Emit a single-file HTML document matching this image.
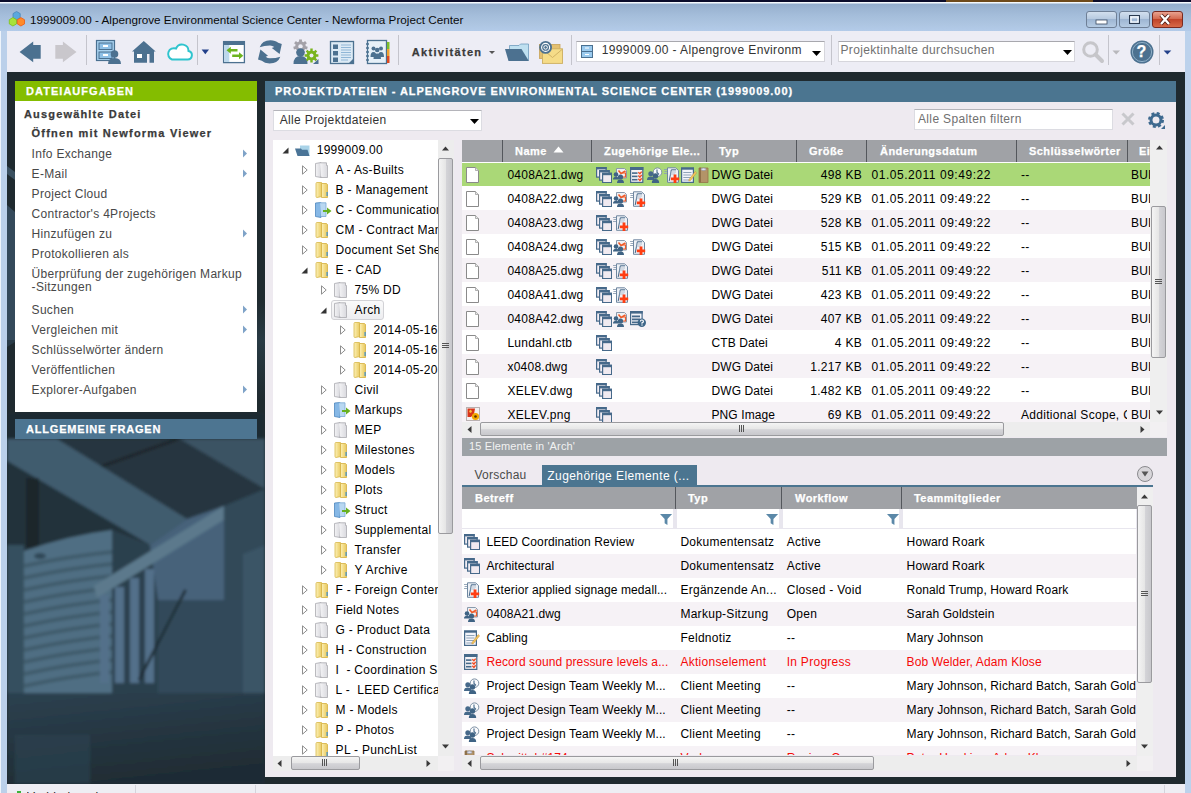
<!DOCTYPE html>
<html><head><meta charset="utf-8">
<style>
*{margin:0;padding:0;box-sizing:border-box}
html,body{width:1191px;height:793px;overflow:hidden;background:#A9C1DC;font-family:"Liberation Sans",sans-serif;font-size:12px;color:#000;position:relative}
.a{position:absolute}
.t{position:absolute;white-space:nowrap;line-height:1}
.b{font-weight:bold;-webkit-text-stroke:0.25px currentColor}
svg{position:absolute;overflow:visible}
</style></head><body>

<svg width="0" height="0" style="position:absolute;left:0;top:0">
<defs>
<linearGradient id="gy" x1="0" x2="1" y1="0" y2="0"><stop offset="0" stop-color="#FBF1BC"/><stop offset="0.5" stop-color="#F3DC86"/><stop offset="1" stop-color="#E6C760"/></linearGradient>
<linearGradient id="gg" x1="0" x2="1" y1="0" y2="0"><stop offset="0" stop-color="#F4F4F6"/><stop offset="1" stop-color="#D9D9DE"/></linearGradient>
<linearGradient id="gthv" x1="0" x2="1" y1="0" y2="0"><stop offset="0" stop-color="#F2F2F2"/><stop offset="0.45" stop-color="#EAEAEA"/><stop offset="0.55" stop-color="#D8D8DA"/><stop offset="1" stop-color="#C9C9CC"/></linearGradient>
<linearGradient id="gthh" x1="0" x2="0" y1="0" y2="1"><stop offset="0" stop-color="#F2F2F2"/><stop offset="0.45" stop-color="#EAEAEA"/><stop offset="0.55" stop-color="#D8D8DA"/><stop offset="1" stop-color="#C9C9CC"/></linearGradient>

<!-- tree: expanders -->
<symbol id="exo" viewBox="0 0 6 10"><path d="M0.5 0.8L5.2 5L0.5 9.2Z" fill="none" stroke="#8E8E8E" stroke-width="1"/></symbol>
<symbol id="exf" viewBox="0 0 7 7"><path d="M0.5 6.5H6.5V0.5Z" fill="#333"/></symbol>

<!-- yellow folder 14x16 -->
<symbol id="fy" viewBox="0 0 14 16">
<path d="M1 1.5Q1 0.5 2 0.5H6.5L7 1.5V14.5L2 15.5Q1 15.5 1 14.5Z" fill="url(#gy)" stroke="#D8B848" stroke-width="0.8"/>
<path d="M6.5 1.5H11.5L12.5 2.5V15.5H6.5Z" fill="url(#gy)" stroke="#D4B040" stroke-width="0.8"/>
<rect x="11.5" y="10" width="1.2" height="4" fill="#3C8FD0"/>
</symbol>
<!-- grey folder -->
<symbol id="fg" viewBox="0 0 14 16">
<path d="M0.5 1.5L6 0.5V15.5L0.5 14.5Z" fill="url(#gg)" stroke="#A9A9AE" stroke-width="0.8"/>
<path d="M5 0.8H11.5V3.5H12.5V15.5H6V14.5" fill="url(#gg)" stroke="#A9A9AE" stroke-width="0.8"/>
</symbol>
<!-- blue folder w green arrow -->
<symbol id="fb" viewBox="0 0 18 16">
<path d="M0.5 1L6 0.5V15.5L0.5 14.5Z" fill="#86B8E6" stroke="#4D86BE" stroke-width="0.8"/>
<path d="M5 0.8H11V14.5H6" fill="#B9D8F2" stroke="#7AA8D4" stroke-width="0.8"/>
<path d="M8 8H12V5.5L16.5 9L12 12.5V10H8Z" fill="#67B020"/>
</symbol>
<!-- root folder -->
<symbol id="fr" viewBox="0 0 16 12">
<path d="M5 0.5H14.5V11H5Z" fill="#A9D3E8"/>
<path d="M0 3.5H6L7 4.8H12.5L14.5 11H2.5Z" fill="#4A7497"/>
</symbol>
<!-- page -->
<symbol id="pg" viewBox="0 0 13 16">
<path d="M0.5 0.5H9.5L12.5 3.5V15.5H0.5Z" fill="#fff" stroke="#8A8A8A" stroke-width="1"/>
<path d="M9.5 0.5V3.5H12.5" fill="#E8E8E8" stroke="#A0A0A0" stroke-width="0.8"/>
</symbol>
<symbol id="png" viewBox="0 0 16 16">
<rect x="0.5" y="0.5" width="13" height="13" fill="#F4F0F0" stroke="#B8B0B0"/>
<path d="M1.5 1.5H9L8 7L5 10H1.5Z" fill="#D8341A"/>
<path d="M3 4L5 2.5L6 5L4 6Z" fill="#F6C040"/>
<circle cx="9.5" cy="9.5" r="3.6" fill="#F2A800"/><circle cx="9.5" cy="9.5" r="1.3" fill="#5A3000"/>
</symbol>

<!-- related: docset -->
<symbol id="rds" viewBox="0 0 16 16">
<rect x="0.6" y="0.6" width="9.5" height="9.5" fill="#F3EEF4" stroke="#46698A" stroke-width="1.2"/><rect x="0" y="0" width="10.7" height="2.4" fill="#46698A"/>
<rect x="3.6" y="3.6" width="9.5" height="9.5" fill="#F3EEF4" stroke="#46698A" stroke-width="1.2"/><rect x="3" y="3" width="10.7" height="2.4" fill="#46698A"/>
<rect x="6.6" y="6.3" width="9" height="9.3" fill="#F0EAF0" stroke="#46698A" stroke-width="1.2"/><rect x="6" y="5.8" width="10.2" height="2.4" fill="#46698A"/>
</symbol>
<!-- markup session -->
<symbol id="rmk" viewBox="0 0 16 16">
<path d="M3.5 1.5H11.5L13.5 3.5V11H3.5Z" fill="#EEF0F4" stroke="#8A9AAC" stroke-width="1"/>
<path d="M5.5 3.5L8 6.5L12.5 4" fill="none" stroke="#F05A28" stroke-width="1.6"/>
<path d="M9 6H12.5V10H10" fill="none" stroke="#F05A28" stroke-width="1.2"/>
<circle cx="3" cy="7.5" r="2.3" fill="#3F6384"/><path d="M0 12.5Q0 9.8 3 9.8Q6 9.8 6 12.5Z" fill="#3F6384"/>
<circle cx="7.5" cy="10" r="2.6" fill="#3F6384"/><path d="M4 16Q4 12.6 7.5 12.6Q11 12.6 11 16Z" fill="#3F6384"/>
</symbol>
<!-- action list -->
<symbol id="rac" viewBox="0 0 16 16">
<rect x="0.6" y="0.6" width="12.2" height="14.8" fill="#F6F2F6" stroke="#46698A" stroke-width="1.2"/><rect x="0" y="0" width="13.4" height="3" fill="#46698A"/>
<rect x="2" y="5.3" width="5.5" height="1.6" fill="#46698A"/><rect x="2" y="8.6" width="5.5" height="1.6" fill="#46698A"/><rect x="2" y="11.9" width="5.5" height="1.6" fill="#46698A"/>
<path d="M8.3 5.2l1.6 1.6 1.8-2.2M8.3 8.5l1.6 1.6 1.8-2.2M8.3 11.8l1.6 1.6 1.8-2.2" fill="none" stroke="#F04A22" stroke-width="1.4"/>
</symbol>
<!-- meeting -->
<symbol id="rmt" viewBox="0 0 16 16">
<circle cx="10.5" cy="5.2" r="4.3" fill="#FAFAFC" stroke="#7C90A4" stroke-width="1"/><path d="M10 2.5V5.5L12 7.5" fill="none" stroke="#46698A" stroke-width="1.1"/>
<circle cx="3.8" cy="6.8" r="2.5" fill="#46698A"/><path d="M0 13Q0 9.6 3.8 9.6Q7.6 9.6 7.6 13Z" fill="#46698A"/>
<circle cx="8.5" cy="9" r="2.7" fill="#3F6384"/><path d="M4.8 16Q4.8 12 8.5 12Q12.2 12 12.2 16Z" fill="#3F6384"/>
</symbol>
<!-- supplemental -->
<symbol id="rsp" viewBox="0 0 16 16">
<path d="M0 2.5H3M0.5 4.5H3M0 6.5H3" stroke="#8FA0B4" stroke-width="0.9"/>
<path d="M3.5 0.8H11.5L14.5 3.5V15.3H3.5Z" fill="#EEF1F6" stroke="#6F87A0" stroke-width="1"/>
<path d="M5.2 14L7.3 2.8H12" fill="none" stroke="#46698A" stroke-width="1"/>
<path d="M6 5H12M6 7H11" stroke="#A8B6C6" stroke-width="0.8"/>
<path d="M9.6 7.6H12.4V10.4H15.2V13.2H12.4V16H9.6V13.2H6.8V10.4H9.6Z" fill="#FF3E12"/>
</symbol>
<!-- field note -->
<symbol id="rfn" viewBox="0 0 16 16">
<rect x="0.6" y="1.1" width="11.8" height="14.3" fill="#F2F4FA" stroke="#46698A" stroke-width="1.2"/><rect x="0" y="0.5" width="13" height="2.2" fill="#46698A"/>
<path d="M2.3 5.5H10.5M2.3 8H10.5M2.3 10.5H10.5M2.3 13H8" stroke="#90A4B8" stroke-width="1"/>
<path d="M8.2 12.2L14.2 4.6L15.6 5.8L9.6 13.4L7.8 14Z" fill="#F2C860" stroke="#C88A30" stroke-width="0.5"/>
</symbol>
<!-- transmittal -->
<symbol id="rtr" viewBox="0 0 16 16">
<path d="M1 1H10V15.5H1Z" fill="#B39468" stroke="#94744A" stroke-width="0.8"/>
<path d="M1 1L3 0.5V15.5L1 15.5Z" fill="#8F7048"/>
<ellipse cx="5.5" cy="2.3" rx="2.5" ry="1.2" fill="#E4E0EC" stroke="#8090A8" stroke-width="0.6"/>
</symbol>
<!-- list doc with ? -->
<symbol id="rq" viewBox="0 0 16 16">
<rect x="0.6" y="0.6" width="11.5" height="13" fill="#F4F4F8" stroke="#46698A" stroke-width="1.2"/><rect x="0" y="0" width="12.7" height="2.6" fill="#46698A"/>
<rect x="2" y="4.5" width="8" height="1.8" fill="#46698A"/><rect x="2" y="7.5" width="8" height="1.8" fill="#46698A"/><rect x="2" y="10.5" width="6" height="1.8" fill="#46698A"/>
<circle cx="11.8" cy="11.8" r="4.2" fill="#3E6688"/>
<path d="M10.4 10.6Q10.4 9 11.9 9Q13.4 9 13.4 10.5Q13.4 11.4 12 11.9V12.7" fill="none" stroke="#fff" stroke-width="1.2"/><rect x="11.4" y="13.4" width="1.2" height="1.2" fill="#fff"/>
</symbol>
<!-- filter funnel -->
<symbol id="fun" viewBox="0 0 14 14"><path d="M0 1H13L8 6.5V13L5 11V6.5Z" fill="#5B88A8"/></symbol>
<!-- scroll arrows -->
<symbol id="au" viewBox="0 0 9 5"><path d="M1 4.5L4.5 0.5L8 4.5Z" fill="#3A3A3A"/></symbol>
<symbol id="ad" viewBox="0 0 9 5"><path d="M1 0.5L4.5 4.5L8 0.5Z" fill="#3A3A3A"/></symbol>
<symbol id="al" viewBox="0 0 5 9"><path d="M4.5 1L0.5 4.5L4.5 8Z" fill="#3A3A3A"/></symbol>
<symbol id="ar" viewBox="0 0 5 9"><path d="M0.5 1L4.5 4.5L0.5 8Z" fill="#3A3A3A"/></symbol>
</defs></svg>
<div class="a" style="left:0px;top:0px;width:1191px;height:2px;background:#0B0C2A;"></div>
<div class="a" style="left:946px;top:0px;width:147px;height:2px;background:#6E4A1C;"></div>
<div class="a" style="left:0px;top:2px;width:1191px;height:29px;background:linear-gradient(#F4F8FC 0,#F4F8FC 1px,#94AECD 2px,#9BB4D2 6px,#A5BEDB 14px,#ADC5E1 22px,#B3CBE9 29px);"></div>
<div class="a" style="left:0px;top:31px;width:7px;height:762px;background:#BBD0EA;"></div>
<div class="a" style="left:0px;top:31px;width:1px;height:762px;background:#EEF4FB;"></div>
<div class="a" style="left:1185px;top:31px;width:6px;height:762px;background:#BCD2EC;"></div>
<svg width="18" height="18" style="left:8px;top:10px">
<path d="M8.6 1.5L12.2 3.6V7.8L8.6 9.9L5 7.8V3.6Z" fill="#5BA8DD" stroke="#4E86B8" stroke-width="0.8"/>
<path d="M4.9 7.6L8.5 9.7V13.9L4.9 16L1.3 13.9V9.7Z" fill="#A8E23A" stroke="#7CC21A" stroke-width="0.8"/>
<path d="M12.9 7.6L16.5 9.7V13.9L12.9 16L9.3 13.9V9.7Z" fill="#FF8A2A" stroke="#F05A10" stroke-width="0.8"/>
</svg>
<div class="t" style="left:30.0px;top:13.80px;font-size:11.7px;color:#0A0A0A;">1999009.00 - Alpengrove Environmental Science Center - Newforma Project Center</div>
<div class="a" style="left:1086px;top:11px;width:31px;height:17px;background:linear-gradient(#D2DFEE,#B7CAE0 45%,#9EB6D3 50%,#B5CBE3);border:1px solid #6E7F96;border-radius:3px;"></div>
<div class="a" style="left:1119px;top:11px;width:31px;height:17px;background:linear-gradient(#D2DFEE,#B7CAE0 45%,#9EB6D3 50%,#B5CBE3);border:1px solid #6E7F96;border-radius:3px;"></div>
<div class="a" style="left:1152px;top:11px;width:31px;height:17px;background:linear-gradient(#E8A290,#D46A50 45%,#C0442A 50%,#D86A48);border:1px solid #7A2A20;border-radius:3px;"></div>
<svg width="100" height="20" style="left:1086px;top:11px">
<rect x="10" y="9" width="11" height="4" fill="#fff" stroke="#3A4A60" stroke-width="0.8"/>
<rect x="43.5" y="4.5" width="10" height="8" fill="none" stroke="#2A3A50" stroke-width="1"/><rect x="45" y="6" width="7" height="5" fill="none" stroke="#fff" stroke-width="1.2"/>
<path d="M75 4L83 13M83 4L75 13" stroke="#4A1810" stroke-width="4"/><path d="M75 4L83 13M83 4L75 13" stroke="#fff" stroke-width="2.4"/>
</svg>
<div class="a" style="left:7px;top:31px;width:1178px;height:41px;background:#EDEDF5;"></div>
<div class="a" style="left:86px;top:35px;width:1px;height:30px;background:#C4C4CC;"></div>
<div class="a" style="left:197px;top:35px;width:1px;height:30px;background:#C4C4CC;"></div>
<div class="a" style="left:398px;top:35px;width:1px;height:30px;background:#C4C4CC;"></div>
<div class="a" style="left:571px;top:35px;width:1px;height:30px;background:#C4C4CC;"></div>
<div class="a" style="left:831px;top:35px;width:1px;height:30px;background:#C4C4CC;"></div>
<div class="a" style="left:1108px;top:35px;width:1px;height:30px;background:#C4C4CC;"></div>
<div class="a" style="left:1159px;top:35px;width:1px;height:30px;background:#C4C4CC;"></div>
<svg width="1191" height="41" style="left:0;top:31px">
<path d="M19.6 20.9L33.2 10.6V14H40.7V27.7H33.2V31.2Z" fill="#4C7190"/>
<path d="M76.5 20.9L62.9 10.6V14H55.3V27.7H62.9V31.2Z" fill="#C9C7CC"/>
<!-- cabinet -->
<rect x="96.5" y="9.5" width="18" height="20" fill="#A9D2F0" stroke="#4A7090" stroke-width="1.2"/>
<rect x="99" y="12" width="13" height="6.5" fill="#8FC0E6" stroke="#4A7090" stroke-width="1"/>
<rect x="99" y="21" width="13" height="6.5" fill="#8FC0E6" stroke="#4A7090" stroke-width="1"/>
<rect x="103" y="14" width="5" height="2" fill="#fff"/><rect x="103" y="23" width="5" height="2" fill="#fff"/>
<circle cx="114.5" cy="23" r="3.8" fill="#4C7190"/><path d="M108 33Q108 27 114.5 27Q121 27 121 33Z" fill="#4C7190"/>
<!-- house -->
<path d="M132 20.5L143.8 10L155.7 20.5H154V31.7H149.5V23H147V31.7H134V20.5Z" fill="#4C7190"/>
<rect x="137" y="23" width="5" height="4" fill="#fff"/>
<!-- cloud -->
<path d="M172 28.5H187.5A4.3 4.3 0 0 0 188.5 20A6.5 6.5 0 0 0 176 17.5A4.8 4.8 0 0 0 172 28.5Z" fill="#fff" stroke="#2FC4CE" stroke-width="2"/>
<path d="M201.6 18.6H209L205.3 23.2Z" fill="#22408A"/>
<!-- transfer -->
<rect x="223.6" y="10.6" width="20.8" height="21" fill="#fff" stroke="#4C7190" stroke-width="1.3"/>
<rect x="223" y="10" width="22" height="4" fill="#4C7190"/>
<rect x="224.3" y="14" width="5" height="17" fill="#BCD8EC"/>
<path d="M226.5 19.3L230.8 15.8V18.1H237.5V20.5H230.8V22.8Z" fill="#6CB41E"/>
<path d="M243.3 24.8L239 21.3V23.6H232.2V26H239V28.3Z" fill="#6CB41E"/>
<!-- sync -->
<path d="M259.7 16.3Q262 9.2 270.5 9.2Q275.5 9.2 278.2 11.8L281.8 13L279.6 23L271.8 16.9L274.3 15.9Q272.5 14.4 270 14.4Q264 14.4 259.7 16.3Z" fill="#4C7190"/>
<path d="M280.3 25.7Q278 32.4 269.5 32.4Q264.5 32.4 261.8 29.8L258 28.6L260.4 18.6L268 24.7L265.7 25.7Q267.5 27.2 270 27.2Q276 27.2 280.3 25.7Z" fill="#4C7190"/>
<!-- gear person -->
<path d="M299.07 10.40L299.06 8.45L301.94 8.45L301.93 10.40L303.60 11.20L305.11 9.97L306.92 12.23L305.38 13.44L305.79 15.24L307.70 15.66L307.06 18.48L305.16 18.03L304.00 19.48L304.86 21.23L302.26 22.48L301.42 20.72L299.58 20.72L298.74 22.48L296.14 21.23L297.00 19.48L295.84 18.03L293.94 18.48L293.30 15.66L295.21 15.24L295.62 13.44L294.08 12.23L295.89 9.97L297.40 11.20Z" fill="#A3A1A8"/><circle cx="300.5" cy="15.5" r="2.2" fill="#EDEDF5"/>
<circle cx="300.5" cy="21.5" r="4.3" fill="#4C7190"/><path d="M293.5 33Q293.5 25 300.5 25Q307.5 25 307.5 33Z" fill="#4C7190"/>
<path d="M310.31 19.64L310.27 17.61L312.73 17.61L312.69 19.64L314.10 20.23L315.50 18.76L317.24 20.50L315.77 21.90L316.36 23.31L318.39 23.27L318.39 25.73L316.36 25.69L315.77 27.10L317.24 28.50L315.50 30.24L314.10 28.77L312.69 29.36L312.73 31.39L310.27 31.39L310.31 29.36L308.90 28.77L307.50 30.24L305.76 28.50L307.23 27.10L306.64 25.69L304.61 25.73L304.61 23.27L306.64 23.31L307.23 21.90L305.76 20.50L307.50 18.76L308.90 20.23Z" fill="#78B41C"/><circle cx="311.5" cy="24.5" r="2" fill="#EDEDF5"/>
<path d="M313 33H318.5V28Z" fill="#4C7190"/>
<!-- list -->
<rect x="330.5" y="10.5" width="23" height="22" fill="#DCEAF5" stroke="#4C7190" stroke-width="1.3"/>
<rect x="333" y="13.5" width="5" height="4.5" fill="#4C7190"/><rect x="333" y="20" width="5" height="4.5" fill="#4C7190"/><rect x="333" y="26.5" width="5" height="4.5" fill="#4C7190"/>
<path d="M341 14H351M341 16.5H351M341 19H351M341 21.5H351M341 24H351M341 26.5H351M341 29H348" stroke="#8FB6D6" stroke-width="1.2"/>
<path d="M354 33H348L354 27Z" fill="#4C7190"/>
<!-- address book -->
<rect x="367.5" y="9.5" width="19" height="23" fill="#E6F0F8" stroke="#4C7190" stroke-width="1.3"/>
<path d="M366 13H369M366 17H369M366 21H369M366 25H369M366 29H369" stroke="#4C7190" stroke-width="1.5"/>
<rect x="387" y="11" width="2.5" height="7" fill="#7CBF2A"/><rect x="387" y="18" width="2.5" height="7" fill="#F0A030"/><rect x="387" y="25" width="2.5" height="7" fill="#E04A20"/>
<circle cx="373.5" cy="17.5" r="2" fill="#4C7190"/><circle cx="381" cy="17.5" r="2" fill="#4C7190"/><circle cx="377.2" cy="19" r="2.3" fill="#4C7190"/>
<path d="M370.5 26Q370.5 21 373.5 21Q376.5 21 376.5 26ZM378 26Q378 21 381 21Q384 21 384 26Z" fill="#4C7190"/>
<path d="M373.5 28Q373.5 22.5 377.2 22.5Q381 22.5 381 28Z" fill="#4C7190"/>
<!-- activities arrow -->
<path d="M489 20H495L492 23Z" fill="#555"/>
<!-- folder -->
<path d="M509.5 14.5H519L520.5 13H528.5V29.5H509.5Z" fill="#BFE0F0" stroke="#6E9CBC" stroke-width="0.8"/>
<path d="M505 18H521.5L528.8 30H508.5Z" fill="#4C7190"/>
<!-- mail -->
<rect x="539.5" y="13.5" width="20.5" height="14" fill="#E4C070" stroke="#C8A458" stroke-width="0.8"/>
<rect x="542.5" y="17.8" width="20" height="14.6" fill="#F5DC88" stroke="#CDAE60" stroke-width="0.9"/>
<path d="M543 18.5L552.5 26.5L562 18.5" fill="none" stroke="#CDAE60" stroke-width="0.9"/>
<circle cx="545.6" cy="16.4" r="6.4" fill="#4C7190"/>
<circle cx="545.6" cy="16.4" r="4" fill="none" stroke="#fff" stroke-width="1.1"/>
<circle cx="545.6" cy="16.4" r="1.8" fill="none" stroke="#fff" stroke-width="1"/>
<!-- magnifier -->
<circle cx="1090.5" cy="18.5" r="6.8" fill="#EDEDF5" stroke="#C6C6CA" stroke-width="3"/>
<path d="M1095.5 23.5L1102 30" stroke="#C6C6CA" stroke-width="4" stroke-linecap="round"/>
<path d="M1112.5 19.5H1120L1116.2 23.5Z" fill="#B8B8BC"/>
<!-- help -->
<circle cx="1142" cy="21" r="11.5" fill="#4C7190"/>
<circle cx="1142" cy="21" r="9.6" fill="none" stroke="#8FB0C8" stroke-width="1"/>
<path d="M1163.6 19.5H1171.3L1167.4 23.5Z" fill="#22408A"/>
</svg>
<div class="t b" style="left:1136.6px;top:44.46px;font-size:16px;color:#FFFFFF;">?</div>
<div class="t b" style="left:411.8px;top:46.99px;font-size:11px;letter-spacing:1.3px;color:#3A3A3A;">Aktivit&auml;ten</div>
<div class="a" style="left:576px;top:41px;width:249px;height:21px;background:#FFFFFF;border:1px solid #D6D6DC;border-top-color:#A8A8AE"></div>
<svg width="12" height="13" style="left:581px;top:45px"><rect x="0.5" y="0.5" width="11" height="12" fill="#9ACAEE" stroke="#4A7090"/><path d="M1 6.5H11" stroke="#4A7090"/><path d="M4 3H8M4 9.5H8" stroke="#fff" stroke-width="1.2"/></svg>
<div class="t" style="left:601.7px;top:43.74px;letter-spacing:0.38px;color:#333333;">1999009.00 - Alpengrove Environm</div>
<svg width="9" height="5" style="left:812px;top:51px"><path d="M0 0H9L4.5 5Z" fill="#000"/></svg>
<div class="a" style="left:838px;top:41px;width:237px;height:21px;background:#FFFFFF;border:1px solid #D6D6DC;border-top-color:#A8A8AE"></div>
<div class="t" style="left:840.4px;top:44.44px;letter-spacing:0.37px;color:#707070;">Projektinhalte durchsuchen</div>
<svg width="9" height="5" style="left:1063px;top:50px"><path d="M0 0H9L4.5 5Z" fill="#000"/></svg>
<div class="a" style="left:7px;top:72px;width:1178px;height:712px;background:#1F2A2F;"></div>
<svg width="10" height="340" style="left:7px;top:72px"><path d="M0 94L8 100V108L0 102Z" fill="#3A5060"/><path d="M0 133L8 140V268H0Z" fill="#34495A"/><path d="M0 268H8V270L0 275Z" fill="#2A3C48"/></svg><div class="a" style="left:257px;top:300px;width:8px;height:100px;background:linear-gradient(#1F2A2F,#283A44 40%,#1F2A2F);"></div>
<div class="a" style="left:7px;top:784px;width:1178px;height:9px;background:#EEEEF4;"></div>
<div class="a" style="left:135px;top:785px;width:1px;height:8px;background:#D4D4DC;"></div>
<div class="a" style="left:255px;top:785px;width:1px;height:8px;background:#D4D4DC;"></div>
<div class="a" style="left:1164px;top:785px;width:1px;height:8px;background:#D4D4DC;"></div>
<div class="a" style="left:17px;top:791px;width:4px;height:2px;background:#3DB23A;"></div>
<div class="a" style="left:27px;top:784px;width:105px;height:9px;overflow:hidden"><div class="t" style="left:0.0px;top:6.84px;letter-spacing:0.4px;color:#222;">Verbindung hergestellt</div>
</div><svg width="258" height="372" style="left:7px;top:412px;overflow:hidden" viewBox="7 412 258 372">
<defs><linearGradient id="abot" x1="0" x2="0.3" y1="0" y2="1"><stop offset="0" stop-color="#2C4150"/><stop offset="1" stop-color="#1F2C34"/></linearGradient><filter id="abl" x="-5%" y="-5%" width="110%" height="110%"><feGaussianBlur stdDeviation="1.8"/></filter></defs>
<g filter="url(#abl)">
<rect x="7" y="412" width="258" height="372" fill="#2B404E"/>
<!-- top dark region -->
<path d="M7 412H265V500L230 470L180 439H56L7 412Z" fill="#1F2C33"/>
<path d="M7 412H265V439H7Z" fill="#1F2B32"/>
<!-- dark area above beam, between beams -->
<path d="M57 439H180L265 489V545L224 506L187 519Z" fill="#26363F"/>
<!-- top-right beam -->
<path d="M180 439H265V489Z" fill="#3A5264"/>
<!-- pipe -->
<path d="M100 467L178 439" stroke="#1A252C" stroke-width="3"/>
<!-- main beam -->
<path d="M7 439H57L187 519L150 545L7 461Z" fill="#415C6E"/>
<!-- left dark area below beam -->
<path d="M7 461L150 545L112 530L24 551V700H7Z" fill="#23323B"/>
<rect x="26" y="478" width="13" height="70" fill="#1A252C"/>
<rect x="7" y="545" width="17" height="150" fill="#34505F"/>
<!-- tank -->
<path d="M24 551Q70 535 112 530V693H24Z" fill="#506E83"/>
<g stroke="#405C6C" stroke-width="4" fill="none">
<path d="M24 566Q70 556 112 552"/><path d="M24 578Q70 568 112 564"/><path d="M24 590Q70 580 112 576"/><path d="M24 602Q70 592 112 588"/><path d="M24 614Q70 604 112 600"/><path d="M24 626Q70 616 112 612"/><path d="M24 638Q70 628 112 624"/><path d="M24 650Q70 640 112 636"/><path d="M24 662Q70 652 112 648"/><path d="M24 674Q70 664 112 660"/><path d="M24 686Q70 676 112 672"/>
</g>
<ellipse cx="40" cy="556" rx="6" ry="3" fill="#2F4756"/>
<!-- wall block right of beam -->
<path d="M150 545L187 519L224 506V600H158Z" fill="#46627A"/>
<!-- railing bar -->
<path d="M93.7 586L223.6 506V520L97 598Z" fill="#5C798C"/>
<g fill="#52708A">
<rect x="100" y="595" width="9" height="88"/><rect x="115" y="587" width="9" height="96"/><rect x="130" y="578" width="9" height="105"/><rect x="145" y="569" width="9" height="114"/>
</g>
<path d="M185.5 590L139 680" stroke="#1D2A32" stroke-width="2.5"/>
<!-- right parts -->
<path d="M224 506L265 489V545L243 554V600H224Z" fill="#314859"/>
<path d="M243 554L265 545V693H243Z" fill="#3A5466"/>
<path d="M158 600H243V693H158Z" fill="#324A5A"/>
<!-- bottom -->
<path d="M7 693H265V784H7Z" fill="url(#abot)"/>
<path d="M15 735H90V784H15Z" fill="#2E4554" opacity="0.55"/>
<path d="M185.5 590L139 680" stroke="#1D2A32" stroke-width="2.5"/>
</g></svg>
<div class="a" style="left:15px;top:81px;width:242px;height:20px;background:#84BD00;"></div>
<div class="t b" style="left:26.0px;top:86.19px;font-size:11px;letter-spacing:1.04px;color:#FFFFFF;">DATEIAUFGABEN</div>
<div class="a" style="left:15px;top:101px;width:242px;height:311px;background:#FFFFFF;"></div>
<div class="t b" style="left:24.0px;top:108.69px;font-size:11px;letter-spacing:1.16px;color:#3A3A3A;">Ausgew&auml;hlte Datei</div>
<div class="t b" style="left:31.6px;top:128.49px;font-size:11px;letter-spacing:1.2px;color:#3A3A3A;">&Ouml;ffnen mit Newforma Viewer</div>
<div class="t" style="left:31.6px;top:147.84px;letter-spacing:0.3px;color:#484848;">Info Exchange</div>
<div class="t" style="left:31.6px;top:167.84px;letter-spacing:0.3px;color:#484848;">E-Mail</div>
<div class="t" style="left:31.6px;top:187.84px;letter-spacing:0.3px;color:#484848;">Project Cloud</div>
<div class="t" style="left:31.6px;top:207.84px;letter-spacing:0.3px;color:#484848;">Contractor's 4Projects</div>
<div class="t" style="left:31.6px;top:227.84px;letter-spacing:0.3px;color:#484848;">Hinzuf&uuml;gen zu</div>
<div class="t" style="left:31.6px;top:247.84px;letter-spacing:0.3px;color:#484848;">Protokollieren als</div>
<div class="t" style="left:31.6px;top:267.84px;letter-spacing:0.3px;color:#484848;">&Uuml;berpr&uuml;fung der zugeh&ouml;rigen Markup</div>
<div class="t" style="left:31.6px;top:280.84px;letter-spacing:0.3px;color:#484848;">-Sitzungen</div>
<div class="t" style="left:31.6px;top:303.84px;letter-spacing:0.3px;color:#484848;">Suchen</div>
<div class="t" style="left:31.6px;top:323.84px;letter-spacing:0.3px;color:#484848;">Vergleichen mit</div>
<div class="t" style="left:31.6px;top:343.84px;letter-spacing:0.3px;color:#484848;">Schl&uuml;sselw&ouml;rter &auml;ndern</div>
<div class="t" style="left:31.6px;top:363.84px;letter-spacing:0.3px;color:#484848;">Ver&ouml;ffentlichen</div>
<div class="t" style="left:31.6px;top:383.84px;letter-spacing:0.3px;color:#484848;">Explorer-Aufgaben</div>
<svg width="1" height="1" style="left:0;top:0"><g fill="#7FA3C8"><path d="M243 149.5l4 4-4 4z"/><path d="M243 169.5l4 4-4 4z"/><path d="M243 229.5l4 4-4 4z"/><path d="M243 305.5l4 4-4 4z"/><path d="M243 325.5l4 4-4 4z"/><path d="M243 385.5l4 4-4 4z"/></g></svg>
<div class="a" style="left:15px;top:419px;width:242px;height:20px;background:#4D7591;"></div>
<div class="t b" style="left:26.0px;top:424.19px;font-size:11px;letter-spacing:0.8px;color:#FFFFFF;">ALLGEMEINE FRAGEN</div>
<div class="a" style="left:265px;top:81px;width:911px;height:21px;background:#4B7590;"></div>
<div class="t b" style="left:275.0px;top:85.59px;font-size:11px;letter-spacing:0.95px;color:#FFFFFF;">PROJEKTDATEIEN - ALPENGROVE ENVIRONMENTAL SCIENCE CENTER (1999009.00)</div>
<div class="a" style="left:265px;top:102px;width:911px;height:675px;background:#EEEAF0;"></div>
<div class="a" style="left:273px;top:110px;width:209px;height:21px;background:#FFFFFF;border:1px solid #DCDCE2;border-top-color:#B4B4BA"></div>
<div class="t" style="left:279.7px;top:114.04px;letter-spacing:0.36px;color:#333333;">Alle Projektdateien</div>
<svg width="9" height="5" style="left:470px;top:119px"><path d="M0 0H9L4.5 5Z" fill="#000"/></svg>
<div class="a" style="left:914px;top:109px;width:199px;height:21px;background:#FFFFFF;border:1px solid #DCDCE2;border-top-color:#B4B4BA"></div>
<div class="t" style="left:918.0px;top:112.74px;letter-spacing:0.35px;color:#707070;">Alle Spalten filtern</div>
<svg width="20" height="20" style="left:1120px;top:111px"><path d="M2.5 2.5L13.5 13.5M13.5 2.5L2.5 13.5" stroke="#C8C8CC" stroke-width="3"/></svg>
<svg width="20" height="20" style="left:1147px;top:111px">
<circle cx="9" cy="9" r="6" fill="none" stroke="#3F6A8F" stroke-width="4" stroke-dasharray="2.6 2.1"/>
<circle cx="9" cy="9" r="5" fill="none" stroke="#3F6A8F" stroke-width="3"/>
<path d="M14 18H18V14Z" fill="#3F6A8F"/>
</svg>
<div class="a" style="left:273px;top:140px;width:165px;height:616px;background:#FFFFFF;"></div>
<div class="a" style="left:273px;top:140px;width:165px;height:616px;overflow:hidden">
<svg width="7" height="7" style="left:9px;top:7px"><use href="#exf"/></svg>
<svg width="16" height="12" style="left:22px;top:5px"><use href="#fr"/></svg>
<div class="t" style="left:43.7px;top:4.24px;letter-spacing:0.28px;">1999009.00</div>
<svg width="6" height="10" style="left:29px;top:25px"><use href="#exo"/></svg>
<svg width="14" height="16" style="left:42px;top:22px"><use href="#fg"/></svg>
<div class="t" style="left:62.6px;top:24.24px;letter-spacing:0.28px;">A - As-Builts</div>
<svg width="6" height="10" style="left:29px;top:45px"><use href="#exo"/></svg>
<svg width="14" height="16" style="left:42px;top:42px"><use href="#fy"/></svg>
<div class="t" style="left:62.6px;top:44.24px;letter-spacing:0.28px;">B - Management</div>
<svg width="6" height="10" style="left:29px;top:65px"><use href="#exo"/></svg>
<svg width="18" height="16" style="left:42px;top:62px"><use href="#fb"/></svg>
<div class="t" style="left:62.6px;top:64.24px;letter-spacing:0.28px;">C - Communications</div>
<svg width="6" height="10" style="left:29px;top:85px"><use href="#exo"/></svg>
<svg width="14" height="16" style="left:42px;top:82px"><use href="#fy"/></svg>
<div class="t" style="left:62.6px;top:84.24px;letter-spacing:0.28px;">CM - Contract Management</div>
<svg width="6" height="10" style="left:29px;top:105px"><use href="#exo"/></svg>
<svg width="14" height="16" style="left:42px;top:102px"><use href="#fy"/></svg>
<div class="t" style="left:62.6px;top:104.24px;letter-spacing:0.28px;">Document Set Sheets</div>
<svg width="7" height="7" style="left:28px;top:127px"><use href="#exf"/></svg>
<svg width="14" height="16" style="left:42px;top:122px"><use href="#fy"/></svg>
<div class="t" style="left:62.6px;top:124.24px;letter-spacing:0.28px;">E - CAD</div>
<svg width="6" height="10" style="left:48px;top:145px"><use href="#exo"/></svg>
<svg width="14" height="16" style="left:61px;top:142px"><use href="#fg"/></svg>
<div class="t" style="left:81.6px;top:144.24px;letter-spacing:0.28px;">75% DD</div>
<svg width="7" height="7" style="left:47px;top:167px"><use href="#exf"/></svg>
<svg width="14" height="16" style="left:61px;top:162px"><use href="#fg"/></svg>
<div class="a" style="left:58px;top:160px;width:53px;height:20px;border:1px solid #D2D2D6;border-radius:3px;background:linear-gradient(#FAFAFA,#EDEDF0)"></div>
<svg width="14" height="16" style="left:61px;top:162px"><use href="#fg"/></svg>
<div class="t" style="left:81.6px;top:164.24px;letter-spacing:0.28px;">Arch</div>
<svg width="6" height="10" style="left:67px;top:185px"><use href="#exo"/></svg>
<svg width="14" height="16" style="left:80px;top:182px"><use href="#fy"/></svg>
<div class="t" style="left:100.6px;top:184.24px;letter-spacing:0.28px;">2014-05-16</div>
<svg width="6" height="10" style="left:67px;top:205px"><use href="#exo"/></svg>
<svg width="14" height="16" style="left:80px;top:202px"><use href="#fy"/></svg>
<div class="t" style="left:100.6px;top:204.24px;letter-spacing:0.28px;">2014-05-16</div>
<svg width="6" height="10" style="left:67px;top:225px"><use href="#exo"/></svg>
<svg width="14" height="16" style="left:80px;top:222px"><use href="#fy"/></svg>
<div class="t" style="left:100.6px;top:224.24px;letter-spacing:0.28px;">2014-05-20</div>
<svg width="6" height="10" style="left:48px;top:245px"><use href="#exo"/></svg>
<svg width="14" height="16" style="left:61px;top:242px"><use href="#fg"/></svg>
<div class="t" style="left:81.6px;top:244.24px;letter-spacing:0.28px;">Civil</div>
<svg width="6" height="10" style="left:48px;top:265px"><use href="#exo"/></svg>
<svg width="18" height="16" style="left:61px;top:262px"><use href="#fb"/></svg>
<div class="t" style="left:81.6px;top:264.24px;letter-spacing:0.28px;">Markups</div>
<svg width="6" height="10" style="left:48px;top:285px"><use href="#exo"/></svg>
<svg width="14" height="16" style="left:61px;top:282px"><use href="#fg"/></svg>
<div class="t" style="left:81.6px;top:284.24px;letter-spacing:0.28px;">MEP</div>
<svg width="6" height="10" style="left:48px;top:305px"><use href="#exo"/></svg>
<svg width="14" height="16" style="left:61px;top:302px"><use href="#fy"/></svg>
<div class="t" style="left:81.6px;top:304.24px;letter-spacing:0.28px;">Milestones</div>
<svg width="6" height="10" style="left:48px;top:325px"><use href="#exo"/></svg>
<svg width="14" height="16" style="left:61px;top:322px"><use href="#fy"/></svg>
<div class="t" style="left:81.6px;top:324.24px;letter-spacing:0.28px;">Models</div>
<svg width="6" height="10" style="left:48px;top:345px"><use href="#exo"/></svg>
<svg width="14" height="16" style="left:61px;top:342px"><use href="#fy"/></svg>
<div class="t" style="left:81.6px;top:344.24px;letter-spacing:0.28px;">Plots</div>
<svg width="6" height="10" style="left:48px;top:365px"><use href="#exo"/></svg>
<svg width="18" height="16" style="left:61px;top:362px"><use href="#fb"/></svg>
<div class="t" style="left:81.6px;top:364.24px;letter-spacing:0.28px;">Struct</div>
<svg width="6" height="10" style="left:48px;top:385px"><use href="#exo"/></svg>
<svg width="14" height="16" style="left:61px;top:382px"><use href="#fg"/></svg>
<div class="t" style="left:81.6px;top:384.24px;letter-spacing:0.28px;">Supplemental</div>
<svg width="6" height="10" style="left:48px;top:405px"><use href="#exo"/></svg>
<svg width="14" height="16" style="left:61px;top:402px"><use href="#fy"/></svg>
<div class="t" style="left:81.6px;top:404.24px;letter-spacing:0.28px;">Transfer</div>
<svg width="6" height="10" style="left:48px;top:425px"><use href="#exo"/></svg>
<svg width="14" height="16" style="left:61px;top:422px"><use href="#fy"/></svg>
<div class="t" style="left:81.6px;top:424.24px;letter-spacing:0.28px;">Y Archive</div>
<svg width="6" height="10" style="left:29px;top:445px"><use href="#exo"/></svg>
<svg width="14" height="16" style="left:42px;top:442px"><use href="#fy"/></svg>
<div class="t" style="left:62.6px;top:444.24px;letter-spacing:0.28px;">F - Foreign Content</div>
<svg width="6" height="10" style="left:29px;top:465px"><use href="#exo"/></svg>
<svg width="14" height="16" style="left:42px;top:462px"><use href="#fg"/></svg>
<div class="t" style="left:62.6px;top:464.24px;letter-spacing:0.28px;">Field Notes</div>
<svg width="6" height="10" style="left:29px;top:485px"><use href="#exo"/></svg>
<svg width="14" height="16" style="left:42px;top:482px"><use href="#fg"/></svg>
<div class="t" style="left:62.6px;top:484.24px;letter-spacing:0.28px;">G - Product Data</div>
<svg width="6" height="10" style="left:29px;top:505px"><use href="#exo"/></svg>
<svg width="14" height="16" style="left:42px;top:502px"><use href="#fy"/></svg>
<div class="t" style="left:62.6px;top:504.24px;letter-spacing:0.28px;">H - Construction</div>
<svg width="6" height="10" style="left:29px;top:525px"><use href="#exo"/></svg>
<svg width="14" height="16" style="left:42px;top:522px"><use href="#fg"/></svg>
<div class="t" style="left:62.6px;top:524.24px;letter-spacing:0.28px;">I&nbsp; - Coordination Sets</div>
<svg width="6" height="10" style="left:29px;top:545px"><use href="#exo"/></svg>
<svg width="14" height="16" style="left:42px;top:542px"><use href="#fg"/></svg>
<div class="t" style="left:62.6px;top:544.24px;letter-spacing:0.28px;">L - &nbsp;LEED Certification</div>
<svg width="6" height="10" style="left:29px;top:565px"><use href="#exo"/></svg>
<svg width="14" height="16" style="left:42px;top:562px"><use href="#fy"/></svg>
<div class="t" style="left:62.6px;top:564.24px;letter-spacing:0.28px;">M - Models</div>
<svg width="6" height="10" style="left:29px;top:585px"><use href="#exo"/></svg>
<svg width="14" height="16" style="left:42px;top:582px"><use href="#fy"/></svg>
<div class="t" style="left:62.6px;top:584.24px;letter-spacing:0.28px;">P - Photos</div>
<svg width="6" height="10" style="left:29px;top:605px"><use href="#exo"/></svg>
<svg width="14" height="16" style="left:42px;top:602px"><use href="#fy"/></svg>
<div class="t" style="left:62.6px;top:604.24px;letter-spacing:0.28px;">PL - PunchList</div>
</div>
<div class="a" style="left:438px;top:140px;width:16px;height:616px;background:#EDEDED;"></div>
<svg width="9" height="5" style="left:441px;top:146px"><use href="#au"/></svg>
<div class="a" style="left:438px;top:158px;width:15px;height:376px;border:1px solid #9A9A9E;border-radius:2px;background:linear-gradient(90deg,#F4F4F4,#E6E6E6 50%,#D4D4D8 55%,#C8C8CC)"></div>
<svg width="8" height="6" style="left:442px;top:343px"><path d="M0 0.5H7M0 2.5H7M0 4.5H7" stroke="#555" stroke-width="1"/></svg>
<svg width="9" height="5" style="left:441px;top:744px"><use href="#ad"/></svg>
<div class="a" style="left:273px;top:756px;width:181px;height:15px;background:#EDEDED;"></div>
<svg width="5" height="9" style="left:277px;top:759px"><use href="#al"/></svg>
<div class="a" style="left:291px;top:756px;width:69px;height:14px;border:1px solid #9A9A9E;border-radius:2px;background:linear-gradient(#F4F4F4,#E6E6E6 50%,#D4D4D8 55%,#C8C8CC)"></div>
<svg width="6" height="8" style="left:322px;top:759px"><path d="M0.5 0V7M2.5 0V7M4.5 0V7" stroke="#555" stroke-width="1"/></svg>
<svg width="5" height="9" style="left:426px;top:759px"><use href="#ar"/></svg>
<div class="a" style="left:438px;top:756px;width:16px;height:15px;background:#F2F0F2;"></div>
<div class="a" style="left:462px;top:140px;width:688px;height:22px;background:#A0A2A6;"></div>
<div class="a" style="left:502px;top:140px;width:1px;height:22px;background:#54575C;"></div>
<div class="a" style="left:591px;top:140px;width:1px;height:22px;background:#54575C;"></div>
<div class="a" style="left:706px;top:140px;width:1px;height:22px;background:#54575C;"></div>
<div class="a" style="left:796px;top:140px;width:1px;height:22px;background:#54575C;"></div>
<div class="a" style="left:866px;top:140px;width:1px;height:22px;background:#54575C;"></div>
<div class="a" style="left:1016px;top:140px;width:1px;height:22px;background:#54575C;"></div>
<div class="a" style="left:1127px;top:140px;width:1px;height:22px;background:#54575C;"></div>
<div class="a" style="left:462px;top:140px;width:688px;height:22px;overflow:hidden">
<div class="t b" style="left:53.0px;top:5.69px;font-size:11px;letter-spacing:0.45px;color:#FFFFFF;">Name</div>
<div class="t b" style="left:142.0px;top:5.69px;font-size:11px;letter-spacing:0.45px;color:#FFFFFF;">Zugeh&ouml;rige Ele...</div>
<div class="t b" style="left:257.0px;top:5.69px;font-size:11px;letter-spacing:0.45px;color:#FFFFFF;">Typ</div>
<div class="t b" style="left:347.0px;top:5.69px;font-size:11px;letter-spacing:0.45px;color:#FFFFFF;">Gr&ouml;&szlig;e</div>
<div class="t b" style="left:418.0px;top:5.69px;font-size:11px;letter-spacing:0.45px;color:#FFFFFF;">&Auml;nderungsdatum</div>
<div class="t b" style="left:567.0px;top:5.69px;font-size:11px;letter-spacing:0.45px;color:#FFFFFF;">Schl&uuml;sselw&ouml;rter</div>
<div class="t b" style="left:677.0px;top:5.69px;font-size:11px;letter-spacing:0.45px;color:#FFFFFF;">Ei</div>
<svg width="12" height="7" style="left:91px;top:6px"><path d="M0.5 6.5L5.5 0.5L10.5 6.5Z" fill="#fff"/></svg>
</div>
<div class="a" style="left:462px;top:162px;width:688px;height:1px;background:#FFFFFF;"></div>
<div class="a" style="left:462px;top:163px;width:688px;height:259px;overflow:hidden;background:#fff">
<div class="a" style="left:0px;top:-1px;width:688px;height:24px;background:#AAD877;"></div>
<svg width="13" height="16" style="left:4px;top:4px"><use href="#pg"/></svg>
<div class="t" style="left:45.4px;top:6.44px;letter-spacing:0.25px;">0408A21.dwg</div>
<svg width="16" height="16" style="left:134px;top:4px"><use href="#rds"/></svg>
<svg width="16" height="16" style="left:151px;top:4px"><use href="#rmk"/></svg>
<svg width="16" height="16" style="left:168px;top:4px"><use href="#rac"/></svg>
<svg width="16" height="16" style="left:185px;top:4px"><use href="#rmt"/></svg>
<svg width="16" height="16" style="left:202px;top:4px"><use href="#rsp"/></svg>
<svg width="16" height="16" style="left:219px;top:4px"><use href="#rfn"/></svg>
<svg width="16" height="16" style="left:236px;top:4px"><use href="#rtr"/></svg>
<div class="t" style="left:249.5px;top:6.44px;letter-spacing:0.1px;">DWG Datei</div>
<div class="t" style="right:288px;top:6.44px;letter-spacing:0.3px">498 KB</div>
<div class="t" style="left:409.5px;top:6.44px;letter-spacing:0.54px;">01.05.2011 09:49:22</div>
<div class="a" style="left:555px;top:-1px;width:110px;height:24px;overflow:hidden"><div class="t" style="left:4.0px;top:7.44px;letter-spacing:0.3px;">--</div>
</div>
<div class="t" style="left:669.0px;top:6.44px;letter-spacing:0.2px;">BUI</div>
<div class="a" style="left:0px;top:23px;width:688px;height:24px;background:#FFFFFF;"></div>
<svg width="13" height="16" style="left:4px;top:28px"><use href="#pg"/></svg>
<div class="t" style="left:45.4px;top:30.44px;letter-spacing:0.25px;">0408A22.dwg</div>
<svg width="16" height="16" style="left:134px;top:28px"><use href="#rds"/></svg>
<svg width="16" height="16" style="left:151px;top:28px"><use href="#rmk"/></svg>
<svg width="16" height="16" style="left:168px;top:28px"><use href="#rsp"/></svg>
<div class="t" style="left:249.5px;top:30.44px;letter-spacing:0.1px;">DWG Datei</div>
<div class="t" style="right:288px;top:30.44px;letter-spacing:0.3px">529 KB</div>
<div class="t" style="left:409.5px;top:30.44px;letter-spacing:0.54px;">01.05.2011 09:49:22</div>
<div class="a" style="left:555px;top:23px;width:110px;height:24px;overflow:hidden"><div class="t" style="left:4.0px;top:7.44px;letter-spacing:0.3px;">--</div>
</div>
<div class="t" style="left:669.0px;top:30.44px;letter-spacing:0.2px;">BUI</div>
<div class="a" style="left:0px;top:47px;width:688px;height:24px;background:#F6F2F6;"></div>
<svg width="13" height="16" style="left:4px;top:52px"><use href="#pg"/></svg>
<div class="t" style="left:45.4px;top:54.44px;letter-spacing:0.25px;">0408A23.dwg</div>
<svg width="16" height="16" style="left:134px;top:52px"><use href="#rds"/></svg>
<svg width="16" height="16" style="left:151px;top:52px"><use href="#rsp"/></svg>
<div class="t" style="left:249.5px;top:54.44px;letter-spacing:0.1px;">DWG Datei</div>
<div class="t" style="right:288px;top:54.44px;letter-spacing:0.3px">528 KB</div>
<div class="t" style="left:409.5px;top:54.44px;letter-spacing:0.54px;">01.05.2011 09:49:22</div>
<div class="a" style="left:555px;top:47px;width:110px;height:24px;overflow:hidden"><div class="t" style="left:4.0px;top:7.44px;letter-spacing:0.3px;">--</div>
</div>
<div class="t" style="left:669.0px;top:54.44px;letter-spacing:0.2px;">BUI</div>
<div class="a" style="left:0px;top:71px;width:688px;height:24px;background:#FFFFFF;"></div>
<svg width="13" height="16" style="left:4px;top:76px"><use href="#pg"/></svg>
<div class="t" style="left:45.4px;top:78.44px;letter-spacing:0.25px;">0408A24.dwg</div>
<svg width="16" height="16" style="left:134px;top:76px"><use href="#rds"/></svg>
<svg width="16" height="16" style="left:151px;top:76px"><use href="#rmk"/></svg>
<svg width="16" height="16" style="left:168px;top:76px"><use href="#rsp"/></svg>
<div class="t" style="left:249.5px;top:78.44px;letter-spacing:0.1px;">DWG Datei</div>
<div class="t" style="right:288px;top:78.44px;letter-spacing:0.3px">515 KB</div>
<div class="t" style="left:409.5px;top:78.44px;letter-spacing:0.54px;">01.05.2011 09:49:22</div>
<div class="a" style="left:555px;top:71px;width:110px;height:24px;overflow:hidden"><div class="t" style="left:4.0px;top:7.44px;letter-spacing:0.3px;">--</div>
</div>
<div class="t" style="left:669.0px;top:78.44px;letter-spacing:0.2px;">BUI</div>
<div class="a" style="left:0px;top:95px;width:688px;height:24px;background:#F6F2F6;"></div>
<svg width="13" height="16" style="left:4px;top:100px"><use href="#pg"/></svg>
<div class="t" style="left:45.4px;top:102.44px;letter-spacing:0.25px;">0408A25.dwg</div>
<svg width="16" height="16" style="left:134px;top:100px"><use href="#rds"/></svg>
<svg width="16" height="16" style="left:151px;top:100px"><use href="#rsp"/></svg>
<div class="t" style="left:249.5px;top:102.44px;letter-spacing:0.1px;">DWG Datei</div>
<div class="t" style="right:288px;top:102.44px;letter-spacing:0.3px">511 KB</div>
<div class="t" style="left:409.5px;top:102.44px;letter-spacing:0.54px;">01.05.2011 09:49:22</div>
<div class="a" style="left:555px;top:95px;width:110px;height:24px;overflow:hidden"><div class="t" style="left:4.0px;top:7.44px;letter-spacing:0.3px;">--</div>
</div>
<div class="t" style="left:669.0px;top:102.44px;letter-spacing:0.2px;">BUI</div>
<div class="a" style="left:0px;top:119px;width:688px;height:24px;background:#FFFFFF;"></div>
<svg width="13" height="16" style="left:4px;top:124px"><use href="#pg"/></svg>
<div class="t" style="left:45.4px;top:126.44px;letter-spacing:0.25px;">0408A41.dwg</div>
<svg width="16" height="16" style="left:134px;top:124px"><use href="#rds"/></svg>
<svg width="16" height="16" style="left:151px;top:124px"><use href="#rsp"/></svg>
<div class="t" style="left:249.5px;top:126.44px;letter-spacing:0.1px;">DWG Datei</div>
<div class="t" style="right:288px;top:126.44px;letter-spacing:0.3px">423 KB</div>
<div class="t" style="left:409.5px;top:126.44px;letter-spacing:0.54px;">01.05.2011 09:49:22</div>
<div class="a" style="left:555px;top:119px;width:110px;height:24px;overflow:hidden"><div class="t" style="left:4.0px;top:7.44px;letter-spacing:0.3px;">--</div>
</div>
<div class="t" style="left:669.0px;top:126.44px;letter-spacing:0.2px;">BUI</div>
<div class="a" style="left:0px;top:143px;width:688px;height:24px;background:#F6F2F6;"></div>
<svg width="13" height="16" style="left:4px;top:148px"><use href="#pg"/></svg>
<div class="t" style="left:45.4px;top:150.44px;letter-spacing:0.25px;">0408A42.dwg</div>
<svg width="16" height="16" style="left:134px;top:148px"><use href="#rds"/></svg>
<svg width="16" height="16" style="left:151px;top:148px"><use href="#rmk"/></svg>
<svg width="16" height="16" style="left:168px;top:148px"><use href="#rq"/></svg>
<div class="t" style="left:249.5px;top:150.44px;letter-spacing:0.1px;">DWG Datei</div>
<div class="t" style="right:288px;top:150.44px;letter-spacing:0.3px">407 KB</div>
<div class="t" style="left:409.5px;top:150.44px;letter-spacing:0.54px;">01.05.2011 09:49:22</div>
<div class="a" style="left:555px;top:143px;width:110px;height:24px;overflow:hidden"><div class="t" style="left:4.0px;top:7.44px;letter-spacing:0.3px;">--</div>
</div>
<div class="t" style="left:669.0px;top:150.44px;letter-spacing:0.2px;">BUI</div>
<div class="a" style="left:0px;top:167px;width:688px;height:24px;background:#FFFFFF;"></div>
<svg width="13" height="16" style="left:4px;top:172px"><use href="#pg"/></svg>
<div class="t" style="left:45.4px;top:174.44px;letter-spacing:0.25px;">Lundahl.ctb</div>
<svg width="16" height="16" style="left:134px;top:172px"><use href="#rds"/></svg>
<div class="t" style="left:249.5px;top:174.44px;letter-spacing:0.1px;">CTB Datei</div>
<div class="t" style="right:288px;top:174.44px;letter-spacing:0.3px">4 KB</div>
<div class="t" style="left:409.5px;top:174.44px;letter-spacing:0.54px;">01.05.2011 09:49:22</div>
<div class="a" style="left:555px;top:167px;width:110px;height:24px;overflow:hidden"><div class="t" style="left:4.0px;top:7.44px;letter-spacing:0.3px;">--</div>
</div>
<div class="t" style="left:669.0px;top:174.44px;letter-spacing:0.2px;">BUI</div>
<div class="a" style="left:0px;top:191px;width:688px;height:24px;background:#F6F2F6;"></div>
<svg width="13" height="16" style="left:4px;top:196px"><use href="#pg"/></svg>
<div class="t" style="left:45.4px;top:198.44px;letter-spacing:0.25px;">x0408.dwg</div>
<svg width="16" height="16" style="left:134px;top:196px"><use href="#rds"/></svg>
<div class="t" style="left:249.5px;top:198.44px;letter-spacing:0.1px;">DWG Datei</div>
<div class="t" style="right:288px;top:198.44px;letter-spacing:0.3px">1.217 KB</div>
<div class="t" style="left:409.5px;top:198.44px;letter-spacing:0.54px;">01.05.2011 09:49:22</div>
<div class="a" style="left:555px;top:191px;width:110px;height:24px;overflow:hidden"><div class="t" style="left:4.0px;top:7.44px;letter-spacing:0.3px;">--</div>
</div>
<div class="t" style="left:669.0px;top:198.44px;letter-spacing:0.2px;">BUI</div>
<div class="a" style="left:0px;top:215px;width:688px;height:24px;background:#FFFFFF;"></div>
<svg width="13" height="16" style="left:4px;top:220px"><use href="#pg"/></svg>
<div class="t" style="left:45.4px;top:222.44px;letter-spacing:0.25px;">XELEV.dwg</div>
<svg width="16" height="16" style="left:134px;top:220px"><use href="#rds"/></svg>
<div class="t" style="left:249.5px;top:222.44px;letter-spacing:0.1px;">DWG Datei</div>
<div class="t" style="right:288px;top:222.44px;letter-spacing:0.3px">1.482 KB</div>
<div class="t" style="left:409.5px;top:222.44px;letter-spacing:0.54px;">01.05.2011 09:49:22</div>
<div class="a" style="left:555px;top:215px;width:110px;height:24px;overflow:hidden"><div class="t" style="left:4.0px;top:7.44px;letter-spacing:0.3px;">--</div>
</div>
<div class="t" style="left:669.0px;top:222.44px;letter-spacing:0.2px;">BUI</div>
<div class="a" style="left:0px;top:239px;width:688px;height:24px;background:#F6F2F6;"></div>
<svg width="16" height="16" style="left:4px;top:244px"><use href="#png"/></svg>
<div class="t" style="left:45.4px;top:246.44px;letter-spacing:0.25px;">XELEV.png</div>
<svg width="16" height="16" style="left:134px;top:244px"><use href="#rds"/></svg>
<div class="t" style="left:249.5px;top:246.44px;letter-spacing:0.1px;">PNG Image</div>
<div class="t" style="right:288px;top:246.44px;letter-spacing:0.3px">69 KB</div>
<div class="t" style="left:409.5px;top:246.44px;letter-spacing:0.54px;">01.05.2011 09:49:22</div>
<div class="a" style="left:555px;top:239px;width:110px;height:24px;overflow:hidden"><div class="t" style="left:4.0px;top:7.44px;letter-spacing:0.3px;">Additional Scope, Change</div>
</div>
<div class="t" style="left:669.0px;top:246.44px;letter-spacing:0.2px;">BUI</div>
</div>
<div class="a" style="left:1150px;top:140px;width:17px;height:282px;background:#EFEFEF;"></div>
<svg width="9" height="5" style="left:1155px;top:145px"><use href="#au"/></svg>
<div class="a" style="left:1151px;top:206px;width:15px;height:152px;border:1px solid #9A9A9E;border-radius:2px;background:linear-gradient(90deg,#F4F4F4,#E6E6E6 50%,#D4D4D8 55%,#C8C8CC)"></div>
<svg width="8" height="6" style="left:1155px;top:279px"><path d="M0 0.5H7M0 2.5H7M0 4.5H7" stroke="#555" stroke-width="1"/></svg>
<svg width="9" height="5" style="left:1155px;top:410px"><use href="#ad"/></svg>
<div class="a" style="left:462px;top:422px;width:688px;height:15px;background:#EDEDED;"></div>
<svg width="5" height="9" style="left:467px;top:425px"><use href="#al"/></svg>
<div class="a" style="left:480px;top:422px;width:524px;height:14px;border:1px solid #9A9A9E;border-radius:2px;background:linear-gradient(#F4F4F4,#E6E6E6 50%,#D4D4D8 55%,#C8C8CC)"></div>
<svg width="6" height="8" style="left:739px;top:425px"><path d="M0.5 0V7M2.5 0V7M4.5 0V7" stroke="#555" stroke-width="1"/></svg>
<svg width="5" height="9" style="left:1140px;top:425px"><use href="#ar"/></svg>
<div class="a" style="left:1150px;top:422px;width:17px;height:15px;background:#F2F0F2;"></div>
<div class="a" style="left:462px;top:438px;width:705px;height:18px;background:#9DA2A6;"></div>
<div class="t" style="left:469.0px;top:441.29px;font-size:11px;letter-spacing:0.13px;color:#F2F2F2;">15 Elemente in 'Arch'</div>
<div class="t" style="left:474.5px;top:469.34px;letter-spacing:0.25px;color:#4A4A4A;">Vorschau</div>
<div class="a" style="left:542px;top:465px;width:155px;height:21px;background:#4B7590;"></div>
<div class="t" style="left:547.3px;top:470.34px;letter-spacing:0.42px;color:#FFFFFF;">Zugeh&ouml;rige Elemente (...</div>
<svg width="18" height="18" style="left:1136px;top:465px"><circle cx="9" cy="9" r="7.5" fill="#D8D6DA" stroke="#8A8A8E" stroke-width="1"/><path d="M5.5 6.5H12.5L9 11.5Z" fill="#555"/></svg>
<div class="a" style="left:462px;top:485px;width:691px;height:2px;background:#4B7590;"></div>
<div class="a" style="left:462px;top:487px;width:675px;height:22px;background:#A0A2A6;"></div>
<div class="a" style="left:675px;top:487px;width:1px;height:22px;background:#54575C;"></div>
<div class="a" style="left:781px;top:487px;width:1px;height:22px;background:#54575C;"></div>
<div class="a" style="left:901px;top:487px;width:1px;height:22px;background:#54575C;"></div>
<div class="t b" style="left:475.0px;top:492.69px;font-size:11px;letter-spacing:0.45px;color:#FFFFFF;">Betreff</div>
<div class="t b" style="left:688.0px;top:492.69px;font-size:11px;letter-spacing:0.45px;color:#FFFFFF;">Typ</div>
<div class="t b" style="left:795.0px;top:492.69px;font-size:11px;letter-spacing:0.45px;color:#FFFFFF;">Workflow</div>
<div class="t b" style="left:914.0px;top:492.69px;font-size:11px;letter-spacing:0.45px;color:#FFFFFF;">Teammitglieder</div>
<div class="a" style="left:462px;top:509px;width:675px;height:20px;background:#E8E6EE;"></div>
<div class="a" style="left:462px;top:509px;width:211px;height:19px;background:#FFFFFF;"></div>
<div class="a" style="left:677px;top:509px;width:102px;height:19px;background:#FFFFFF;"></div>
<div class="a" style="left:783px;top:509px;width:116px;height:19px;background:#FFFFFF;"></div>
<div class="a" style="left:903px;top:509px;width:233px;height:19px;background:#FFFFFF;"></div>
<svg width="13" height="13" style="left:660px;top:513px"><use href="#fun"/></svg>
<svg width="13" height="13" style="left:766px;top:513px"><use href="#fun"/></svg>
<svg width="13" height="13" style="left:887px;top:513px"><use href="#fun"/></svg>
<div class="a" style="left:462px;top:529px;width:674px;height:226px;overflow:hidden;background:#fff">
<div class="a" style="left:0px;top:1px;width:674px;height:24px;background:#FFFFFF;"></div>
<svg width="16" height="16" style="left:2px;top:5px"><use href="#rds"/></svg>
<div class="t" style="left:24.4px;top:6.94px;letter-spacing:0.1px;">LEED Coordination Review</div>
<div class="t" style="left:218.4px;top:6.94px;letter-spacing:0.28px;">Dokumentensatz</div>
<div class="t" style="left:324.7px;top:6.94px;letter-spacing:0.28px;">Active</div>
<div class="t" style="left:444.6px;top:6.94px;letter-spacing:0.12px;">Howard Roark</div>
<div class="a" style="left:0px;top:25px;width:674px;height:24px;background:#F6F2F6;"></div>
<svg width="16" height="16" style="left:2px;top:29px"><use href="#rds"/></svg>
<div class="t" style="left:24.4px;top:30.94px;letter-spacing:0.1px;">Architectural</div>
<div class="t" style="left:218.4px;top:30.94px;letter-spacing:0.28px;">Dokumentensatz</div>
<div class="t" style="left:324.7px;top:30.94px;letter-spacing:0.28px;">Active</div>
<div class="t" style="left:444.6px;top:30.94px;letter-spacing:0.12px;">Howard Roark</div>
<div class="a" style="left:0px;top:49px;width:674px;height:24px;background:#FFFFFF;"></div>
<svg width="16" height="16" style="left:2px;top:53px"><use href="#rsp"/></svg>
<div class="t" style="left:24.4px;top:54.94px;letter-spacing:0.1px;">Exterior applied signage medall...</div>
<div class="t" style="left:218.4px;top:54.94px;letter-spacing:0.28px;">Erg&auml;nzende An...</div>
<div class="t" style="left:324.7px;top:54.94px;letter-spacing:0.28px;">Closed - Void</div>
<div class="t" style="left:444.6px;top:54.94px;letter-spacing:0.12px;">Ronald Trump, Howard Roark</div>
<div class="a" style="left:0px;top:73px;width:674px;height:24px;background:#F6F2F6;"></div>
<svg width="16" height="16" style="left:2px;top:77px"><use href="#rmk"/></svg>
<div class="t" style="left:24.4px;top:78.94px;letter-spacing:0.1px;">0408A21.dwg</div>
<div class="t" style="left:218.4px;top:78.94px;letter-spacing:0.28px;">Markup-Sitzung</div>
<div class="t" style="left:324.7px;top:78.94px;letter-spacing:0.28px;">Open</div>
<div class="t" style="left:444.6px;top:78.94px;letter-spacing:0.12px;">Sarah Goldstein</div>
<div class="a" style="left:0px;top:97px;width:674px;height:24px;background:#FFFFFF;"></div>
<svg width="16" height="16" style="left:2px;top:101px"><use href="#rfn"/></svg>
<div class="t" style="left:24.4px;top:102.94px;letter-spacing:0.1px;">Cabling</div>
<div class="t" style="left:218.4px;top:102.94px;letter-spacing:0.28px;">Feldnotiz</div>
<div class="t" style="left:324.7px;top:102.94px;letter-spacing:0.28px;">--</div>
<div class="t" style="left:444.6px;top:102.94px;letter-spacing:0.12px;">Mary Johnson</div>
<div class="a" style="left:0px;top:121px;width:674px;height:24px;background:#F6F2F6;"></div>
<svg width="16" height="16" style="left:2px;top:125px"><use href="#rac"/></svg>
<div class="t" style="left:24.4px;top:126.94px;letter-spacing:0.1px;color:#F50A0A;">Record sound pressure levels a...</div>
<div class="t" style="left:218.4px;top:126.94px;letter-spacing:0.28px;color:#F50A0A;">Aktionselement</div>
<div class="t" style="left:324.7px;top:126.94px;letter-spacing:0.28px;color:#F50A0A;">In Progress</div>
<div class="t" style="left:444.6px;top:126.94px;letter-spacing:0.12px;color:#F50A0A;">Bob Welder, Adam Klose</div>
<div class="a" style="left:0px;top:145px;width:674px;height:24px;background:#FFFFFF;"></div>
<svg width="16" height="16" style="left:2px;top:149px"><use href="#rmt"/></svg>
<div class="t" style="left:24.4px;top:150.94px;letter-spacing:0.1px;">Project Design Team Weekly M...</div>
<div class="t" style="left:218.4px;top:150.94px;letter-spacing:0.28px;">Client Meeting</div>
<div class="t" style="left:324.7px;top:150.94px;letter-spacing:0.28px;">--</div>
<div class="t" style="left:444.6px;top:150.94px;letter-spacing:0.12px;">Mary Johnson, Richard Batch, Sarah Goldstein</div>
<div class="a" style="left:0px;top:169px;width:674px;height:24px;background:#F6F2F6;"></div>
<svg width="16" height="16" style="left:2px;top:173px"><use href="#rmt"/></svg>
<div class="t" style="left:24.4px;top:174.94px;letter-spacing:0.1px;">Project Design Team Weekly M...</div>
<div class="t" style="left:218.4px;top:174.94px;letter-spacing:0.28px;">Client Meeting</div>
<div class="t" style="left:324.7px;top:174.94px;letter-spacing:0.28px;">--</div>
<div class="t" style="left:444.6px;top:174.94px;letter-spacing:0.12px;">Mary Johnson, Richard Batch, Sarah Goldstein</div>
<div class="a" style="left:0px;top:193px;width:674px;height:24px;background:#FFFFFF;"></div>
<svg width="16" height="16" style="left:2px;top:197px"><use href="#rmt"/></svg>
<div class="t" style="left:24.4px;top:198.94px;letter-spacing:0.1px;">Project Design Team Weekly M...</div>
<div class="t" style="left:218.4px;top:198.94px;letter-spacing:0.28px;">Client Meeting</div>
<div class="t" style="left:324.7px;top:198.94px;letter-spacing:0.28px;">--</div>
<div class="t" style="left:444.6px;top:198.94px;letter-spacing:0.12px;">Mary Johnson, Richard Batch, Sarah Goldstein</div>
<div class="a" style="left:0px;top:217px;width:674px;height:24px;background:#F6F2F6;"></div>
<svg width="16" height="16" style="left:2px;top:221px"><use href="#rtr"/></svg>
<div class="t" style="left:24.4px;top:222.94px;letter-spacing:0.1px;color:#F50A0A;">Submittal #174</div>
<div class="t" style="left:218.4px;top:222.94px;letter-spacing:0.28px;color:#F50A0A;">Vorlage</div>
<div class="t" style="left:324.7px;top:222.94px;letter-spacing:0.28px;color:#F50A0A;">Review Open</div>
<div class="t" style="left:444.6px;top:222.94px;letter-spacing:0.12px;color:#F50A0A;">Peter Hawking, Adam Klose</div>
</div>
<div class="a" style="left:1137px;top:488px;width:16px;height:268px;background:#EFEFEF;"></div>
<svg width="9" height="5" style="left:1140px;top:494px"><use href="#au"/></svg>
<div class="a" style="left:1137px;top:505px;width:15px;height:178px;border:1px solid #9A9A9E;border-radius:2px;background:linear-gradient(90deg,#F4F4F4,#E6E6E6 50%,#D4D4D8 55%,#C8C8CC)"></div>
<svg width="8" height="6" style="left:1141px;top:591px"><path d="M0 0.5H7M0 2.5H7M0 4.5H7" stroke="#555" stroke-width="1"/></svg>
<svg width="9" height="5" style="left:1140px;top:744px"><use href="#ad"/></svg>
<div class="a" style="left:462px;top:756px;width:675px;height:15px;background:#EDEDED;"></div>
<svg width="5" height="9" style="left:467px;top:759px"><use href="#al"/></svg>
<div class="a" style="left:480px;top:756px;width:394px;height:14px;border:1px solid #9A9A9E;border-radius:2px;background:linear-gradient(#F4F4F4,#E6E6E6 50%,#D4D4D8 55%,#C8C8CC)"></div>
<svg width="6" height="8" style="left:673px;top:759px"><path d="M0.5 0V7M2.5 0V7M4.5 0V7" stroke="#555" stroke-width="1"/></svg>
<svg width="5" height="9" style="left:1126px;top:759px"><use href="#ar"/></svg>
<div class="a" style="left:1137px;top:756px;width:16px;height:15px;background:#F2F0F2;"></div>
</body></html>
